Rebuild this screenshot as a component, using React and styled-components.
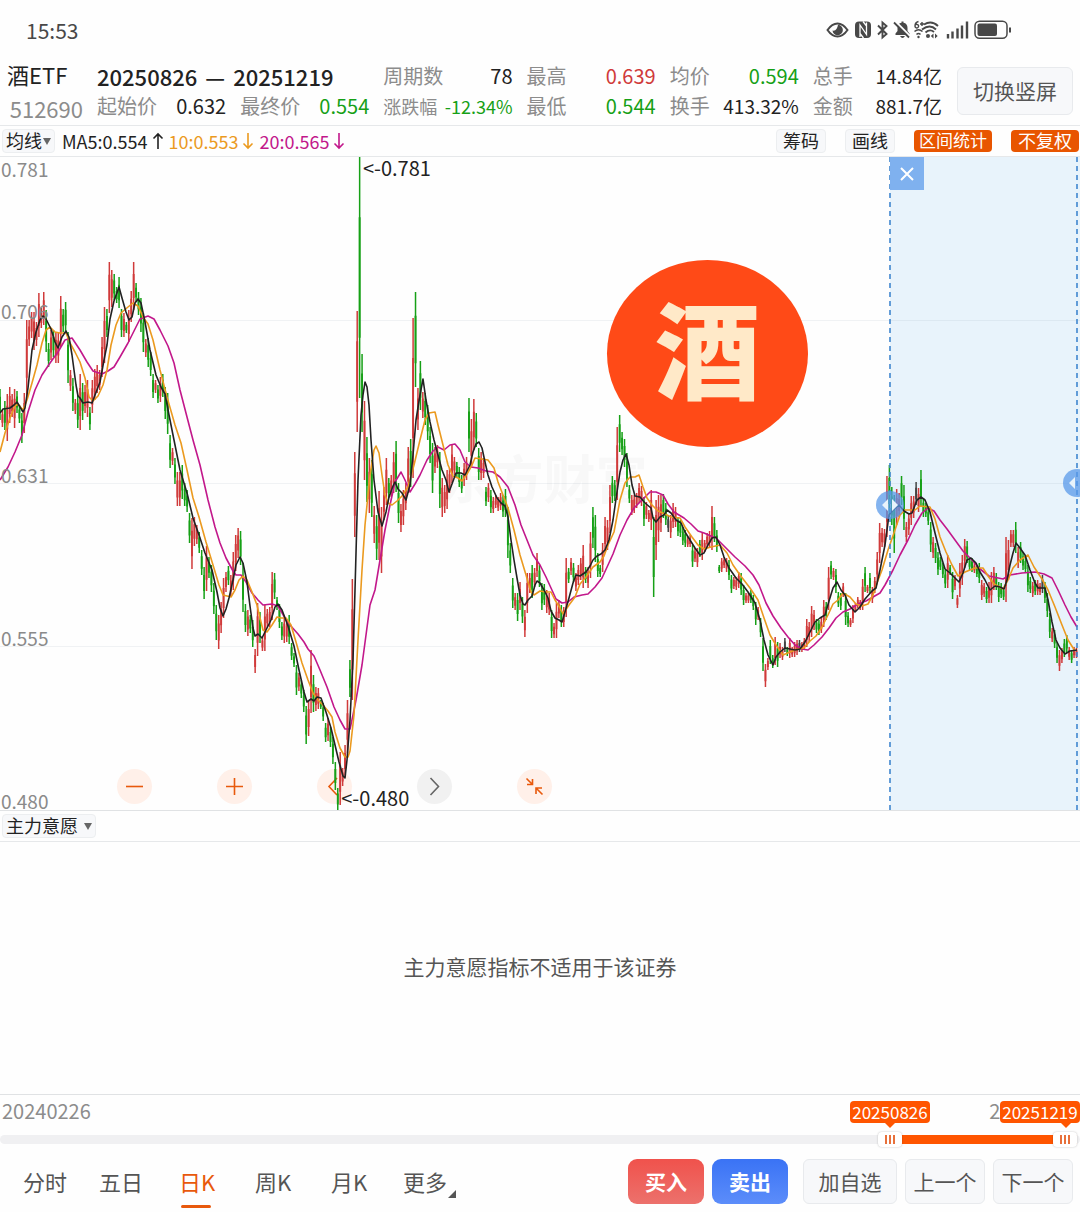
import React, { useState } from 'react';
import styled, { createGlobalStyle } from 'styled-components';

const GlobalStyle = createGlobalStyle`
  * { box-sizing: border-box; }
  body {
    margin: 0;
    background: #fefefe;
    color: #222;
    font-family: "Noto Sans CJK SC", "Noto Sans", sans-serif;
  }
  button, select, input { font-family: inherit; margin: 0; }
`;

const colors = {
  up: '#d03a3a',
  down: '#16a016',
  flat: '#444',
  accent: '#e8590c',
  orange: '#ff5500',
  ma5: '#222',
  ma10: '#eb9a1f',
  ma20: '#c2188b',
  muted: '#8c8c8c',
};

// one entry per day: direction, top, bottom
const candles = `
g389-420 r410-427 g401-430 r394-441 r387-423 r394-417 r389-428 g391-413 g405-423 g413-443
r393-433 r320-397 r320-346 r312-338 r312-350 r322-346 r293-337 r308-328 r292-325 g310-352
g343-367 r330-360 g330-357 r332-363 r333-363 r296-347 g309-332 g302-333 g332-383 r370-391
g378-411 r399-414 g395-428 r374-430 g383-420 r385-413 r380-417 g407-430 r380-413 r369-400
r365-393 r370-390 r337-377 r307-363 g309-337 r262-313 r270-307 g274-300 g287-303 g277-308
g309-337 r313-337 g322-333 r310-342 r291-322 r262-310 g283-302 g292-315 g298-332 g313-352
r339-357 g338-367 g352-376 g374-398 r380-393 g385-403 r377-402 g374-397 g387-419 g393-434
g435-468 r448-465 g458-484 r472-506 r472-506 g465-499 g483-506 g490-512 g513-543 r518-569
r517-546 r525-544 g532-553 g550-575 g567-599 r546-591 g557-578 g565-592 g583-614 g605-640
r615-649 r602-633 r578-618 r572-592 g566-585 r575-597 r552-590 r535-571 r528-558 g531-565
g563-612 g604-632 r610-636 g615-633 g620-647 r649-673 r603-656 g612-643 r637-651 r605-651
r609-628 r607-627 r572-620 g573-599 g597-610 g604-628 g622-640 r617-643 r620-642 g615-644
g643-660 g653-667 g665-695 r673-691 g680-698 g690-712 g706-744 r700-736 r650-713 g675-712
r687-711 r688-709 g700-709 g703-721 g723-742 r718-741 g727-747 g737-764 g762-790 g788-810
r752-805 r768-786 r745-777 r700-753 g660-697 r579-700 r452-537 r311-432 g157-398 g354-432
r401-480 g437-502 r458-513 g460-517 r506-543 g515-560 r491-560 r507-573 r487-520 r458-505
g478-498 r475-497 r452-493 g441-492 g483-523 r504-532 r490-525 r483-510 r447-493 g439-487
r318-478 g292-387 r388-430 g361-410 r392-418 g393-425 g405-440 g427-463 g443-493 r447-473
r445-468 g452-508 r478-517 r485-513 r470-509 r468-493 r445-483 r457-475 g462-478 g467-487
g475-493 r463-486 r457-480 g398-452 r419-468 r399-450 g413-447 g448-480 r452-480 r458-478
g487-506 r483-502 g490-513 r497-513 r495-508 r497-511 r493-510 g495-517 g489-517 g507-558
g543-573 g578-608 r593-610 g593-621 r582-610 g597-623 r610-637 r573-613 r573-593 g565-598
r568-587 r553-577 g565-587 g583-610 g584-605 r590-613 r593-615 g610-638 r623-638 r603-638
r600-618 g605-627 r607-627 r558-617 g568-583 r558-575 g563-582 r573-591 r565-585 r558-580
r545-588 g567-583 r567-588 r532-578 g507-548 g515-562 g553-577 g565-577 r543-572 r517-553
r520-550 r485-533 g476-503 g480-501 r427-500 g415-452 g432-455 g439-467 g453-487 g485-503
r495-515 r495-513 r493-508 r483-503 r486-506 g497-526 r502-519 r510-522 r490-530 g517-597
r500-560 r495-542 r495-532 g494-518 g503-525 k515-532 r515-538 r503-528 r507-527 g517-536
g520-537 g527-545 g530-547 r537-547 r535-547 g545-567 r548-562 r548-567 g540-557 r533-560
r540-552 r533-548 r531-547 r506-550 g517-542 g530-552 g565-573 r558-572 r557-568 r558-572
g560-580 g575-593 r577-589 r577-590 r572-588 g573-595 g585-605 r593-603 r593-603 g590-603
g595-610 g602-625 r607-620 g618-637 g638-671 r664-687 r658-670 g640-664 g655-668 r637-665
g642-667 r643-658 r647-660 k638-652 g647-656 r638-658 r647-657 r642-657 r640-655 k640-652
r642-652 r638-650 r619-647 r622-642 r606-637 r610-630 g619-633 g620-635 r618-633 r600-627
g602-620 r567-610 g561-579 r568-580 g569-593 g592-607 g593-610 r583-597 g593-625 g612-627
r618-627 r605-623 r603-612 r597-608 r600-610 r579-610 g567-592 r585-593 g573-593 r587-603
r577-593 r552-582 r523-563 r528-547 r529-547 r476-537 g465-517 g487-525 g495-553 r489-525
r493-517 g476-505 g485-530 r522-542 r513-535 r496-525 r496-518 k482-505 r488-512 g470-507
g498-517 g503-517 g508-525 g522-552 r537-558 g543-563 g552-575 g557-570 g563-578 g570-588
r555-588 g565-575 g572-599 r575-590 r595-608 r563-597 r555-585 r539-568 g541-563 g557-570
g558-572 r563-573 g565-577 g563-583 r580-600 r583-597 g587-603 r582-603 r572-603 r567-590
g573-590 g582-602 g583-598 g587-600 r537-602 r540-580 r530-547 r530-547 g522-553 r547-568
g542-563 g552-570 g557-573 g565-592 g577-593 r582-597 g580-595 r580-595 r583-595 k575-593
g582-603 g593-617 g613-638 r628-642 g630-648 g642-663 r650-671 r648-663 g639-657 g635-653
r647-660 g650-663 r647-658 r648-658
`.trim().split(/\s+/).map((item) => {
  const [top, bottom] = item.slice(1).split('-').map(Number);
  return { color: { r: colors.up, g: colors.down, k: colors.flat }[item[0]], top, bottom };
});

const STEP = 2.43;

const averages = [
  {
    color: colors.ma20,
    points: '0,480 8,467 15,452 22,435 28,412 35,390 42,375 50,363 58,352 65,340 72,338 80,350 87,362 93,371 102,374 108,371 114,367 120,357 128,343 135,329 140,319 148,316 154,319 160,330 168,346 174,363 180,390 187,417 193,440 200,465 208,500 215,527 220,543 226,558 233,571 236,575 241,575 246,582 252,593 258,600 263,605 272,604 278,606 285,618 290,625 298,634 304,642 308,649 314,656 320,670 327,687 334,707 340,720 345,729 350,729 353,715 356,700 362,665 370,605 375,590 380,560 385,530 390,505 395,482 401,472 405,480 410,492 415,484 420,475 427,460 433,451 438,447 444,450 450,445 455,444 460,450 465,462 471,467 478,468 486,471 493,472 500,477 508,487 515,505 521,525 527,540 533,555 540,565 546,577 551,588 556,599 562,603 568,602 574,597 582,595 588,594 595,587 602,578 608,565 613,554 620,535 627,520 634,508 640,502 650,492 656,492 663,495 668,504 674,512 684,518 691,524 698,531 704,533 711,536 716,538 724,546 735,557 745,566 753,575 759,585 766,603 773,616 781,628 788,637 795,645 802,649 808,650 814,645 822,637 829,628 836,618 843,612 850,609 858,604 866,601 873,597 880,593 885,585 893,570 900,555 908,540 915,525 922,513 928,508 934,511 940,520 947,529 955,540 963,551 972,560 980,569 989,576 1003,579 1010,575 1022,573 1035,572 1044,574 1052,578 1058,590 1065,605 1071,617 1077,627',
  },
  {
    color: colors.ma10,
    points: '0,452 5,433 10,418 15,406 18,404 23,410 27,400 32,383 37,365 42,343 46,330 50,327 55,332 60,333 66,333 70,343 75,352 80,362 85,378 89,397 93,401 98,396 103,385 107,370 111,345 116,325 121,313 128,307 133,303 138,306 143,317 148,324 153,340 160,370 167,397 175,425 181,443 187,470 193,498 199,517 206,542 213,565 219,585 223,595 227,596 231,597 235,590 239,580 243,576 247,580 252,592 257,605 260,618 263,630 267,632 272,625 277,617 281,618 286,618 291,625 296,642 302,663 308,680 313,693 318,700 323,705 328,711 332,717 335,732 340,748 345,757 348,757 350,751 354,715 358,640 362,570 365,525 370,475 374,450 376,446 379,453 382,475 385,495 388,503 392,505 397,501 402,496 408,487 414,465 420,440 425,420 429,413 435,412 438,425 443,445 448,465 453,476 458,478 462,481 467,474 472,465 475,458 482,459 488,460 494,468 498,482 503,495 508,508 514,530 520,555 526,575 531,592 534,595 540,591 546,592 551,592 555,600 560,608 563,614 569,605 575,597 580,584 586,577 593,567 600,562 604,556 608,545 614,532 620,500 625,483 630,477 635,477 639,475 643,487 647,498 652,505 658,511 665,514 671,517 680,518 685,527 692,537 698,545 704,549 711,547 720,545 727,553 733,565 740,575 750,588 758,600 764,618 770,635 776,645 783,655 790,652 798,649 804,648 810,641 816,636 822,627 828,615 833,604 838,600 843,593 850,597 856,604 862,606 868,604 873,595 877,583 882,570 888,550 895,530 900,515 905,510 915,510 920,506 930,507 935,519 940,537 946,552 952,565 958,576 965,572 975,568 983,568 988,576 994,584 1003,589 1008,580 1013,568 1020,560 1028,555 1034,567 1042,579 1048,590 1055,607 1062,625 1068,640 1075,651',
  },
  {
    color: colors.ma5,
    points: '0,413 3,409 10,408 14,405 17,402 20,407 23,412 25,408 28,388 32,350 36,332 40,320 43,316 46,319 51,329 55,342 58,348 62,337 66,331 69,337 72,355 76,385 78,396 80,398 83,403 88,402 92,403 95,395 100,382 104,360 107,345 110,319 114,301 119,287 122,298 126,312 129,320 132,317 135,303 138,299 141,303 145,322 150,350 156,375 161,387 165,394 169,415 174,440 180,470 187,493 193,518 199,535 205,553 212,570 217,592 220,608 223,616 226,609 229,598 233,580 236,565 240,557 243,563 247,582 250,606 253,628 255,636 258,634 262,638 267,628 271,620 275,607 278,604 282,610 288,626 294,646 299,670 304,692 307,702 311,699 314,701 317,697 321,698 326,712 331,728 335,745 339,762 343,776 345,778 347,760 350,720 353,660 355,590 358,480 361,415 363,395 365,382 367,387 369,405 371,440 374,480 378,512 382,526 386,512 389,497 393,486 395,482 398,489 402,493 406,500 410,485 413,455 416,420 420,395 423,379 426,400 430,422 434,440 438,455 442,470 446,480 449,492 452,484 456,473 461,473 465,475 470,465 473,452 476,444 479,442 482,448 485,462 488,475 492,487 497,498 501,503 505,506 508,517 511,540 514,560 517,578 520,595 523,604 525,605 528,600 532,596 535,585 537,581 540,583 544,590 548,598 551,611 555,618 559,620 562,622 565,612 569,598 573,583 576,575 580,576 586,572 590,566 593,560 597,556 601,554 605,550 609,540 613,520 617,492 620,472 623,460 626,454 629,465 632,485 635,496 640,497 645,503 651,508 653,518 656,522 660,517 664,515 667,510 671,513 676,520 681,523 685,532 690,540 695,548 700,555 704,553 708,545 712,538 716,537 720,545 724,557 729,568 736,578 742,584 748,592 755,603 760,620 764,640 768,655 773,665 776,657 780,652 785,648 790,649 795,650 800,649 805,642 810,632 815,622 820,618 825,615 829,601 833,588 837,582 841,590 845,595 849,605 855,612 860,607 865,599 872,591 876,588 880,570 885,545 889,515 893,510 899,505 904,511 909,514 912,513 917,500 921,497 925,500 930,512 935,533 940,553 945,569 950,573 955,578 959,582 963,573 967,560 971,558 976,563 980,572 985,580 990,590 995,586 1000,587 1004,589 1007,580 1010,565 1013,553 1016,543 1020,548 1025,555 1030,570 1035,583 1038,588 1045,588 1048,600 1052,622 1056,640 1060,648 1065,654 1070,651 1077,650',
  },
];

const Page = styled.main`
  min-height: 100vh;
  display: flex;
  flex-direction: column;
  overflow: hidden;
`;

const StatusBar = styled.div`
  height: 60px;
  display: flex;
  align-items: center;
  justify-content: space-between;
  padding: 0 68px 0 26px;
  color: #484848;
  font-size: 21px;
`;

const StatusIcons = styled.svg`
  display: block;
  width: 186px;
  height: 20px;
`;

const Header = styled.header`
  display: flex;
  align-items: center;
  height: 66px;
  padding: 0 7px 4px;
  border-bottom: 1px solid #e6e8ea;
`;

const Security = styled.div`
  width: 90px;
  flex: none;
  font-size: 22px;
  line-height: 34px;
`;

const Code = styled.div`
  color: ${colors.muted};
  width: 76px;
  text-align: right;
`;

const Stats = styled.div`
  flex: 1;
  display: grid;
  grid-template-columns: repeat(6, 1fr);
  column-gap: 14px;
  margin-right: 15px;
`;

const Period = styled.h1`
  grid-column: span 2;
  display: flex;
  gap: 8px;
  margin: 0;
  font-size: 22px;
  line-height: 30px;
  font-weight: 500;
  white-space: nowrap;
`;

const Stat = styled.div`
  display: flex;
  justify-content: space-between;
  font-size: ${(p) => p.$size || 20}px;
  line-height: 30px;
  white-space: nowrap;
`;

const StatLabel = styled.span`
  color: ${colors.muted};
  font-size: ${(p) => p.$size || 20}px;
`;

const StatValue = styled.span`
  color: ${(p) => p.$color || '#222'};
`;

const GhostButton = styled.button`
  height: ${(p) => p.$height || 45}px;
  width: ${(p) => p.$width}px;
  flex: none;
  padding: 0 0 2px;
  border: 1px solid #e8eaed;
  border-radius: 6px;
  background: #f7f8fa;
  color: #555;
  font-size: 21px;
  white-space: nowrap;
`;

const Toolbar = styled.div`
  height: 31px;
  display: flex;
  align-items: center;
  padding: 0 1px 0 2px;
  border-bottom: 1px solid #e6e8ea;
  font-size: 18px;
`;

const Picker = styled.label`
  position: relative;
  display: flex;
  align-items: center;
  margin-right: 7px;
`;

const PickerSelect = styled.select`
  appearance: none;
  width: ${(p) => p.$width}px;
  height: 24px;
  padding: 0 0 2px 3px;
  border: 1px solid #eceef0;
  border-radius: 4px;
  background: #f7f8fa;
  color: #222;
  font-size: 18px;
  line-height: 20px;
`;

const Caret = styled.svg`
  position: absolute;
  right: 4px;
  width: 8px;
  height: 7px;
  pointer-events: none;
`;

const Average = styled.span`
  display: flex;
  align-items: center;
  gap: 4px;
  margin-right: 5px;
  color: ${(p) => p.$color};
  line-height: 24px;
  white-space: nowrap;
`;

const ToolGroup = styled.div`
  display: flex;
  gap: 19px;
  margin-left: auto;
`;

const ToolButton = styled.button`
  height: ${(p) => (p.$active ? 22 : 24)}px;
  align-self: center;
  padding: 0 ${(p) => p.$pad || 6}px 2px;
  border: ${(p) => (p.$active ? '0' : '1px solid #eceef0')};
  border-radius: 4px;
  background: ${(p) => (p.$active ? '#e85500' : '#f7f8fa')};
  color: ${(p) => (p.$active ? '#fff' : '#222')};
  font-size: ${(p) => (p.$compact ? 17 : 18)}px;
  line-height: 20px;
  white-space: nowrap;
`;

const ChartPanel = styled.section`
  position: relative;
  border-bottom: 1px solid #e0e2e4;
`;

const ChartDrawing = styled.svg`
  position: relative;
  display: block;
  width: 100%;
  pointer-events: none;
`;

const Selection = styled.div`
  position: absolute;
  top: 0;
  bottom: 0;
  left: 82.4%;
  right: 0;
  background: #e8f3fb;
`;

const Watermark = styled.div`
  position: absolute;
  top: 44%;
  left: 40.7%;
  color: #f8f8f8;
  font-size: 52px;
  line-height: 66px;
  font-weight: 700;
`;

const Axis = styled.div`
  position: absolute;
  inset: 0;
  display: grid;
  grid-template-rows: repeat(4, 1fr);
  padding-left: 1px;
  color: #8a8a8a;
  font-size: 19px;
  line-height: 18px;
  pointer-events: none;
`;

const AxisRow = styled.div`
  display: flex;
  flex-direction: column;
  justify-content: flex-end;
`;

const AxisTop = styled.span`
  margin: 3px 0 auto;
`;

const PriceMark = styled.span`
  position: absolute;
  left: ${(p) => p.$left}%;
  ${(p) => (p.$low ? 'bottom: 1px' : 'top: 0')};
  font-size: 20px;
  line-height: 22px;
  white-space: nowrap;
`;

const ChartControls = styled.div`
  position: absolute;
  left: 117px;
  bottom: 6px;
  display: flex;
  gap: 65px;
`;

const RoundButton = styled.button`
  width: 35px;
  height: 35px;
  padding: 0;
  border: 0;
  border-radius: 50%;
  background: ${(p) => (p.$muted ? '#f1f1f1' : '#fff0e9')};
  color: ${(p) => (p.$muted ? '#666' : colors.accent)};

  svg { display: block; }
`;

const CloseButton = styled.button`
  position: absolute;
  top: 0;
  left: 82.4%;
  width: 34px;
  height: 33px;
  padding: 8px;
  border: 0;
  background: #7fb1ef;

  svg { display: block; }
`;

const Badge = styled.div`
  position: absolute;
  left: 56.2%;
  top: 15.8%;
  width: 201px;
  height: 187px;
  padding-bottom: 18px;
  border-radius: 50%;
  display: flex;
  align-items: center;
  justify-content: center;
  background: #ff4a17;
  color: #ffe9c8;
  font-size: 106px;
  line-height: 106px;
  font-weight: 900;
`;

const EmptyPanel = styled.section`
  flex: 1;
  display: flex;
  align-items: center;
  justify-content: center;
  padding-bottom: 4px;
  border-bottom: 1px solid #e0e2e4;
  color: #555;
  font-size: 21px;
`;

const RangePanel = styled.section`
  position: relative;
  height: 56px;
  color: ${colors.muted};
`;

const RangeDates = styled.div`
  display: flex;
  justify-content: space-between;
  padding: 0 2px;
  font-size: 20px;
  line-height: 32px;
`;

const RangeTag = styled.span`
  position: absolute;
  top: 6px;
  right: ${(p) => p.$right};
  width: 80px;
  border-radius: 4px;
  background: ${colors.orange};
  color: #fff;
  font-size: 17px;
  line-height: 22px;
  text-align: center;

  &::after {
    content: '';
    position: absolute;
    top: 22px;
    left: ${(p) => p.$tip}px;
    border: 5px solid transparent;
    border-top-color: ${colors.orange};
    border-bottom: 0;
  }
`;

const Track = styled.div`
  position: relative;
  height: 9px;
  margin-top: 8px;
  border-radius: 5px;
  background: #f0f0f2;
`;

const TrackFill = styled.div`
  position: absolute;
  top: 0;
  bottom: 0;
  background: ${colors.orange};
`;

const RangeInput = styled.input`
  appearance: none;
  position: absolute;
  left: 0;
  top: -3px;
  width: 100%;
  height: 15px;
  background: transparent;
  pointer-events: none;

  &::-webkit-slider-thumb {
    appearance: none;
    width: 24px;
    height: 15px;
    border-radius: 4px;
    box-shadow: 0 0 2px rgba(0, 0, 0, 0.25);
    background:
      linear-gradient(90deg, #e8703a 2px, transparent 2px 4px, #e8703a 4px 6px, transparent 6px 8px, #e8703a 8px) center / 10px 9px no-repeat,
      #fff;
    pointer-events: auto;
  }
`;

const Footer = styled.footer`
  height: 61px;
  display: flex;
  align-items: center;
  justify-content: space-between;
  padding: 0 7px;
`;

const Tabs = styled.nav`
  display: flex;
`;

const Tab = styled.button`
  position: relative;
  width: 76px;
  height: 50px;
  padding: 0 0 2px;
  border: 0;
  background: none;
  color: ${(p) => (p.$active ? colors.accent : '#555')};
  font-size: 22px;
  white-space: nowrap;

  &::after {
    content: '';
    display: ${(p) => (p.$active ? 'block' : 'none')};
    position: absolute;
    bottom: -1px;
    left: 22px;
    right: 24px;
    height: 3px;
    border-radius: 2px;
    background: ${colors.accent};
  }
`;

const MoreCorner = styled.svg`
  position: absolute;
  right: 7px;
  bottom: 9px;
  width: 8px;
  height: 8px;
`;

const Actions = styled.div`
  display: flex;
  gap: 8px;
`;

const TradeButton = styled.button`
  width: 76px;
  height: 45px;
  padding: 0 0 2px;
  border: 0;
  border-radius: 9px;
  background: ${(p) => (p.$sell ? 'linear-gradient(#3a73f5, #5c8dfa)' : 'linear-gradient(#f0524c, #ec716c)')};
  color: #fff;
  font-size: 21px;
  font-weight: 700;
  margin-right: ${(p) => (p.$sell ? 7 : 0)}px;
`;

const StatItem = ({ label, value, color, size, labelSize }) => (
  <Stat $size={size}>
    <StatLabel $size={labelSize}>{label}</StatLabel>
    <StatValue $color={color}>{value}</StatValue>
  </Stat>
);

const Arrow = ({ down }) => (
  <svg width="12" height="18" viewBox="0 0 12 18" fill="none" stroke="currentColor" strokeWidth="1.6">
    <path d={down ? 'M6 1V16M1.5 11.5L6 16L10.5 11.5' : 'M6 17V2M1.5 6.5L6 2L10.5 6.5'} />
  </svg>
);

const Dropdown = ({ label, value, width }) => (
  <Picker>
    <PickerSelect $width={width} aria-label={label} defaultValue={value}>
      <option>{value}</option>
    </PickerSelect>
    <Caret viewBox="0 0 8 7"><path d="M0 0H8L4 7Z" fill="#666" /></Caret>
  </Picker>
);

const DeviceIcons = () => (
  <StatusIcons viewBox="826 20 186 20" fill="none" stroke="#484848" strokeWidth="2">
    <path d="M827.500 30Q832 23.500 837.500 23.500Q843 23.500 847.500 30Q843 36.500 837.500 36.500Q832 36.500 827.500 30Z" />
    <path d="M838 24.800A5.200 5.200 0 1 1 832.500 30.500Q837 31.500 838 24.800Z" fill="#484848" stroke="none" />
    <rect x="855" y="21.500" width="16" height="16.500" rx="4" fill="#484848" stroke="none" />
    <path d="M860 37V25L866.500 34.500V22.500M863 21.500L866.500 26M860 33.500L863.500 38" stroke="#fefefe" strokeWidth="1.300" />
    <path d="M878 25.500L886.500 34L882.500 37.500V22.500L886.500 26L878 34.500" strokeWidth="1.900" />
    <path d="M895.500 35V33.500L897.500 31V28Q897.500 23.500 901.500 22.800V21.500H903.500V22.800Q907.500 23.500 907.500 28V31L909.500 33.500V35ZM900 36H905Q902.500 40 900 36Z" fill="#484848" stroke="none" />
    <path d="M895.500 21.500L911.500 37.500" stroke="#fefefe" strokeWidth="2" />
    <path d="M894 22.500L909 37.500" strokeWidth="1.800" />
    <path d="M918.500 21.500Q915 22.500 915 26A1.800 1.800 0 1 0 915.200 25.300M920 24H924M922 22V26" strokeWidth="1.400" />
    <path d="M924 24.500Q931.500 20 938 26M922 29.500Q930 23.500 936 29.500M925.500 32.500Q930 28.500 934 32" strokeWidth="1.900" />
    <path d="M914.500 31.500Q918.500 28 922.500 31.500M916.500 34.500Q918.500 32.500 920.500 34.500" strokeWidth="1.600" />
    <circle cx="918.500" cy="37" r="1.200" fill="#484848" stroke="none" />
    <circle cx="928" cy="36" r="2" fill="#484848" stroke="none" />
    <path d="M933.500 33.500L930.800 36L933.500 38.500ZM935 33.500L937.700 36L935 38.500Z" fill="#484848" stroke="none" />
    <path d="M948 38.500V34M952.500 38.500V31.500M957.500 38.500V28.500M962 38.500V25.500M967 38.500V21.500" strokeWidth="2.400" />
    <rect x="975" y="21.200" width="32" height="17" rx="4.500" strokeWidth="1.500" />
    <rect x="977.500" y="23.500" width="19.500" height="12.500" rx="2" fill="#484848" stroke="none" />
    <path d="M1010 27.500V32.500" />
  </StatusIcons>
);

const controls = [
  { name: '缩小', path: 'M9 17.500H26' },
  { name: '放大', path: 'M9 17.500H26M17.500 9V26' },
  { name: '左移', path: 'M20 9L12 17.500L20 26' },
  { name: '右移', path: 'M13.500 9L21.500 17.500L13.500 26', muted: true },
  { name: '收起', path: 'M9.500 9.500L15.500 15.500M15.500 10V15.500H10M25.500 25.500L19 19M19 25V19H25' },
];

const KLineChart = () => (
  <ChartPanel>
    <Selection />
    <Watermark>东方财富</Watermark>
    <ChartControls>
      {controls.map((item) => (
        <RoundButton key={item.name} $muted={item.muted} aria-label={item.name}>
          <svg width="35" height="35" fill="none" stroke="currentColor" strokeWidth="1.600">
            <path d={item.path} />
          </svg>
        </RoundButton>
      ))}
    </ChartControls>
    <ChartDrawing viewBox="0 157 1080 653">
      <path d="M0 320.500H1080M0 483.500H1080M0 646.500H1080" stroke="#8899aa" strokeOpacity="0.12" />
      {candles.map((bar, i) => {
        const x = i * STEP;
        const inset = (bar.bottom - bar.top) * 0.25;
        return (
          <g key={i} stroke={bar.color}>
            <path d={`M${x} ${bar.top}V${bar.bottom}`} strokeWidth="1.500" />
            <path d={`M${x} ${bar.top + inset}V${bar.bottom - inset}`} strokeWidth="1.900" />
          </g>
        );
      })}
      {averages.map((line) => (
        <polyline key={line.color} points={line.points} fill="none" stroke={line.color} strokeWidth="1.600" strokeLinejoin="round" />
      ))}
      <path d="M890 157V810M1077 157V810" stroke="#3f86cf" strokeWidth="1.600" strokeDasharray="5 4" />
      <g fill="#5a9aea" fillOpacity="0.75">
        <circle cx="890" cy="505" r="14" />
        <circle cx="1077" cy="483" r="14" />
      </g>
      <path d="M888 499V511L882 505ZM892 499V511L898 505ZM1075 477V489L1069 483Z" fill="#e8f3fb" />
    </ChartDrawing>
    <Axis>
      <AxisRow><AxisTop>0.781</AxisTop>0.706</AxisRow>
      <AxisRow>0.631</AxisRow>
      <AxisRow>0.555</AxisRow>
      <AxisRow>0.480</AxisRow>
    </Axis>
    <PriceMark $left={33.6}>&lt;-0.781</PriceMark>
    <PriceMark $left={31.6} $low>&lt;-0.480</PriceMark>
    <Badge>酒</Badge>
    <CloseButton aria-label="关闭">
      <svg width="18" height="18" stroke="#fff" strokeWidth="2"><path d="M3 3L15 15M15 3L3 15" /></svg>
    </CloseButton>
  </ChartPanel>
);

const DateRange = () => {
  const [start, setStart] = useState(831);
  const [end, setEnd] = useState(997);

  return (
    <RangePanel>
      <RangeDates>
        <span>20240226</span>
        <span>20251219</span>
      </RangeDates>
      <RangeTag $right="150px" $tip={35}>20250826</RangeTag>
      <RangeTag $right="0" $tip={61}>20251219</RangeTag>
      <Track>
        <TrackFill style={{ left: `${start / 10}%`, right: `${100 - end / 10}%` }} />
        <RangeInput type="range" aria-label="起始日期" max="1000" value={start} onChange={(e) => setStart(Math.min(+e.target.value, end))} />
        <RangeInput type="range" aria-label="结束日期" max="1000" value={end} onChange={(e) => setEnd(Math.max(+e.target.value, start))} />
      </Track>
    </RangePanel>
  );
};

const tabs = ['分时', '五日', '日K', '周K', '月K', '更多'];

const App = () => {
  const [tab, setTab] = useState('日K');

  return (
    <Page>
      <GlobalStyle />
      <StatusBar>
        <span>15:53</span>
        <DeviceIcons />
      </StatusBar>
      <Header>
        <Security>
          酒ETF
          <Code>512690</Code>
        </Security>
        <Stats>
          <Period>
            <span>20250826</span>
            <span>—</span>
            <span>20251219</span>
          </Period>
          <StatItem label="周期数" value="78" />
          <StatItem label="最高" value="0.639" color={colors.up} />
          <StatItem label="均价" value="0.594" color={colors.down} />
          <StatItem label="总手" value="14.84亿" size={19} />
          <StatItem label="起始价" value="0.632" />
          <StatItem label="最终价" value="0.554" color={colors.down} />
          <StatItem label="涨跌幅" value="-12.34%" color={colors.down} size={18} labelSize={18} />
          <StatItem label="最低" value="0.544" color={colors.down} />
          <StatItem label="换手" value="413.32%" size={19} />
          <StatItem label="金额" value="881.7亿" size={19} />
        </Stats>
        <GhostButton $width={116} $height={48}>切换竖屏</GhostButton>
      </Header>
      <Toolbar>
        <Dropdown label="主图指标" value="均线" width={53} />
        <Average $color={colors.ma5}>MA5:0.554<Arrow /></Average>
        <Average $color={colors.ma10}>10:0.553<Arrow down /></Average>
        <Average $color={colors.ma20}>20:0.565<Arrow down /></Average>
        <ToolGroup>
          <ToolButton>筹码</ToolButton>
          <ToolButton>画线</ToolButton>
          <ToolButton $active $compact $pad={5}>区间统计</ToolButton>
          <ToolButton $active $pad={7}>不复权</ToolButton>
        </ToolGroup>
      </Toolbar>
      <KLineChart />
      <Toolbar>
        <Dropdown label="副图指标" value="主力意愿" width={94} />
      </Toolbar>
      <EmptyPanel>主力意愿指标不适用于该证券</EmptyPanel>
      <DateRange />
      <Footer>
        <Tabs>
          {tabs.map((name) => (
            <Tab key={name} $active={name === tab} onClick={() => setTab(name)}>
              {name}
              {name === '更多' && <MoreCorner viewBox="0 0 8 8"><path d="M8 0V8H0Z" fill="#555" /></MoreCorner>}
            </Tab>
          ))}
        </Tabs>
        <Actions>
          <TradeButton>买入</TradeButton>
          <TradeButton $sell>卖出</TradeButton>
          <GhostButton $width={94}>加自选</GhostButton>
          <GhostButton $width={80}>上一个</GhostButton>
          <GhostButton $width={80}>下一个</GhostButton>
        </Actions>
      </Footer>
    </Page>
  );
};

export default App;
